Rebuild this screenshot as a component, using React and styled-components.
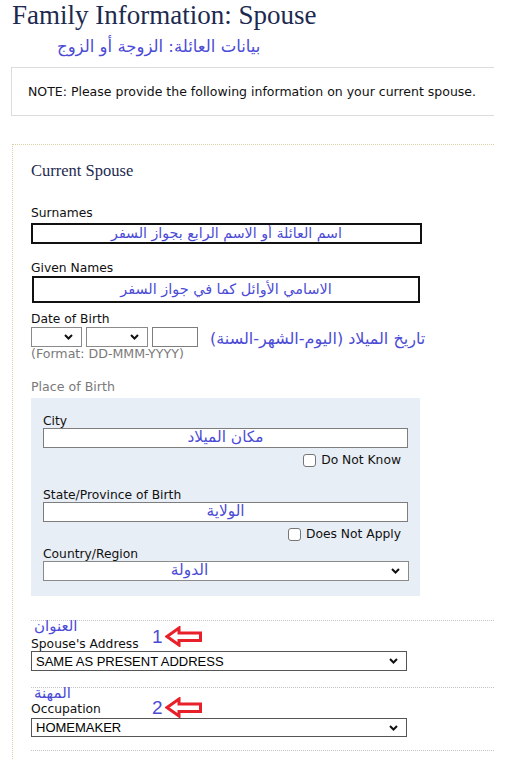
import styled, { createGlobalStyle } from "styled-components";

const GlobalStyle = createGlobalStyle`
  body {
    margin: 0;
    background: #fff;
    font-family: "DejaVu Sans", Verdana, sans-serif;
    color: #111;
  }
`;

const Page = styled.div`
  width: 483px;
  padding-left: 11px;
`;

const Title = styled.h1`
  margin: 0 0 0 1px;
  font-family: "Liberation Serif", serif;
  font-weight: normal;
  font-size: 27px;
  line-height: 30px;
  color: #1d2a4f;
`;

const Arabic = styled.div`
  font-family: "DejaVu Sans", sans-serif;
  color: #4b4bd6;
  font-size: ${(p) => p.size || 15}px;
  line-height: ${(p) => (p.size || 15) + 4}px;
  white-space: nowrap;
`;

const Subtitle = styled(Arabic)`
  display: inline-block;
  margin: 6px 0 0 46px;
  line-height: 22px;
`;

const NoteBox = styled.div`
  margin-top: 9px;
  height: 47px;
  border: 1px solid #dcdcdc;
  border-right: none;
  display: flex;
  align-items: center;
  padding-left: 16px;
  font-size: 12.5px;
  color: #111;
`;

const Fieldset = styled.div`
  margin: 28px 0 0 1px;
  border-top: 1px dotted #dccfa6;
  border-left: 1px dotted #dccfa6;
  padding: 0 0 20px 18px;
`;

const SectionTitle = styled.div`
  margin-top: 16px;
  font-family: "Liberation Serif", serif;
  font-size: 16.5px;
  line-height: 20px;
  color: #1d2a4f;
`;

const Label = styled.div`
  margin-top: ${(p) => p.top || 0}px;
  font-size: ${(p) => (p.muted ? 12.6 : 12.3)}px;
  line-height: ${(p) => p.lh || 15}px;
  color: ${(p) => (p.muted ? "#7a7a7a" : "#111")};
  white-space: nowrap;
`;

const TextBox = styled.div`
  box-sizing: border-box;
  width: ${(p) => p.w}px;
  height: ${(p) => p.h}px;
  margin-top: ${(p) => p.top || 0}px;
  margin-left: ${(p) => p.left || 0}px;
  background: #fff;
  border: ${(p) => (p.strong ? "2px solid #111" : "1px solid #7d7d7d")};
  display: flex;
  align-items: center;
  justify-content: center;
  overflow: hidden;
`;

const SelectBox = styled.div`
  box-sizing: border-box;
  width: ${(p) => p.w}px;
  height: ${(p) => p.h || 20}px;
  margin-top: ${(p) => p.top || 0}px;
  background: #fff;
  border: 1px solid ${(p) => (p.dark ? "#555" : "#8a8a8a")};
  display: flex;
  align-items: center;
  padding: 0 8px 0 4px;
  font-family: "Liberation Sans", Arial, sans-serif;
  font-size: 13px;
  color: #000;
`;

const SelectText = styled.div`
  flex: 1;
  display: flex;
  justify-content: ${(p) => (p.center ? "center" : "flex-start")};
  padding-right: ${(p) => (p.center ? 60 : 0)}px;
`;

const Chevron = () => (
  <svg width="9" height="6" viewBox="0 0 9 6">
    <path d="M1 1 L4.5 4.5 L8 1" fill="none" stroke="#111" strokeWidth="2" />
  </svg>
);

const DateRow = styled.div`
  display: flex;
  align-items: flex-start;
  gap: 12px;
`;

const DateInputs = styled.div`
  display: flex;
  gap: 4px;
`;

const DateHint = styled(Arabic)`
  margin-top: 2px;
`;

const Panel = styled.div`
  box-sizing: border-box;
  width: 389px;
  margin-top: 4px;
  background: #e8eef5;
  padding: 16px 11px 15px 12px;
`;

const CheckRow = styled.div`
  display: flex;
  justify-content: flex-end;
  align-items: center;
  gap: 5px;
  height: 16px;
  margin-top: 4px;
  padding-right: 8px;
  font-size: 12.3px;
`;

const Checkbox = styled.span`
  box-sizing: border-box;
  width: 13px;
  height: 13px;
  border: 1px solid #767676;
  border-radius: 3px;
  background: #fff;
`;

const Section = styled.div`
  margin-top: ${(p) => p.top}px;
  border-top: 1px dotted #c4c4c4;
`;

const SectionHead = styled.div`
  display: flex;
  align-items: flex-start;
`;

const HeadLabels = styled.div`
  width: 121px;
  display: flex;
  flex-direction: column;
  align-items: flex-start;
`;

const HeadArabic = styled(Arabic)`
  margin: -3px 0 0 3px;
  line-height: 16px;
`;

const Marker = styled.div`
  display: flex;
  align-items: center;
  gap: 2px;
  margin-top: ${(p) => p.top}px;
`;

const Number = styled.span`
  font-family: "Liberation Sans", Arial, sans-serif;
  font-size: 19px;
  line-height: 20px;
  color: #4b4bd6;
`;

const Arrow = () => (
  <svg width="38" height="21" viewBox="0 0 38 21">
    <polygon
      points="2,10.5 14,2 14,7 35.5,7 35.5,14.5 14,14.5 14,19"
      fill="#fff"
      stroke="#e8202a"
      strokeWidth="3"
      strokeLinejoin="miter"
    />
  </svg>
);

export default function App() {
  return (
    <Page>
      <GlobalStyle />
      <Title>Family Information: Spouse</Title>
      <Subtitle size={16.5} dir="rtl">بيانات العائلة: الزوجة أو الزوج</Subtitle>
      <NoteBox>NOTE: Please provide the following information on your current spouse.</NoteBox>

      <Fieldset>
        <SectionTitle>Current Spouse</SectionTitle>

        <Label top={25}>Surnames</Label>
        <TextBox strong w={391} h={21} top={2}>
          <Arabic size={14.2}>اسم العائلة أو الاسم الرابع بجواز السفر</Arabic>
        </TextBox>

        <Label top={17}>Given Names</Label>
        <TextBox strong w={388} h={27} left={1}>
          <Arabic size={14.4}>الاسامي الأوائل كما في جواز السفر</Arabic>
        </TextBox>

        <Label top={9}>Date of Birth</Label>
        <DateRow>
          <div>
            <DateInputs>
              <SelectBox w={51}>
                <SelectText />
                <Chevron />
              </SelectBox>
              <SelectBox w={62}>
                <SelectText />
                <Chevron />
              </SelectBox>
              <TextBox w={46} h={20} />
            </DateInputs>
            <Label muted lh={14}>(Format: DD-MMM-YYYY)</Label>
          </div>
          <DateHint size={16}>تاريخ الميلاد (اليوم-الشهر-السنة)</DateHint>
        </DateRow>

        <Label muted top={18}>Place of Birth</Label>
        <Panel>
          <Label lh={14}>City</Label>
          <TextBox w={365} h={20}>
            <Arabic size={15.4}>مكان الميلاد</Arabic>
          </TextBox>
          <CheckRow>
            <Checkbox />
            Do Not Know
          </CheckRow>

          <Label lh={14} top={20}>State/Province of Birth</Label>
          <TextBox w={365} h={20}>
            <Arabic size={15.4}>الولاية</Arabic>
          </TextBox>
          <CheckRow>
            <Checkbox />
            Does Not Apply
          </CheckRow>

          <Label lh={14} top={5}>Country/Region</Label>
          <SelectBox w={366}>
            <SelectText center>
              <Arabic size={15.4}>الدولة</Arabic>
            </SelectText>
            <Chevron />
          </SelectBox>
        </Panel>

        <Section top={24}>
          <SectionHead>
            <HeadLabels>
              <HeadArabic>العنوان</HeadArabic>
              <Label top={3} lh={14}>Spouse's Address</Label>
            </HeadLabels>
            <Marker top={5}>
              <Number>1</Number>
              <Arrow />
            </Marker>
          </SectionHead>
          <SelectBox dark w={376}>
            <SelectText>SAME AS PRESENT ADDRESS</SelectText>
            <Chevron />
          </SelectBox>
        </Section>

        <Section top={16}>
          <SectionHead>
            <HeadLabels>
              <HeadArabic>المهنة</HeadArabic>
              <Label top={1} lh={14}>Occupation</Label>
            </HeadLabels>
            <Marker top={9}>
              <Number>2</Number>
              <Arrow />
            </Marker>
          </SectionHead>
          <SelectBox dark w={376} h={19}>
            <SelectText>HOMEMAKER</SelectText>
            <Chevron />
          </SelectBox>
        </Section>

        <Section top={13} />
      </Fieldset>
    </Page>
  );
}
